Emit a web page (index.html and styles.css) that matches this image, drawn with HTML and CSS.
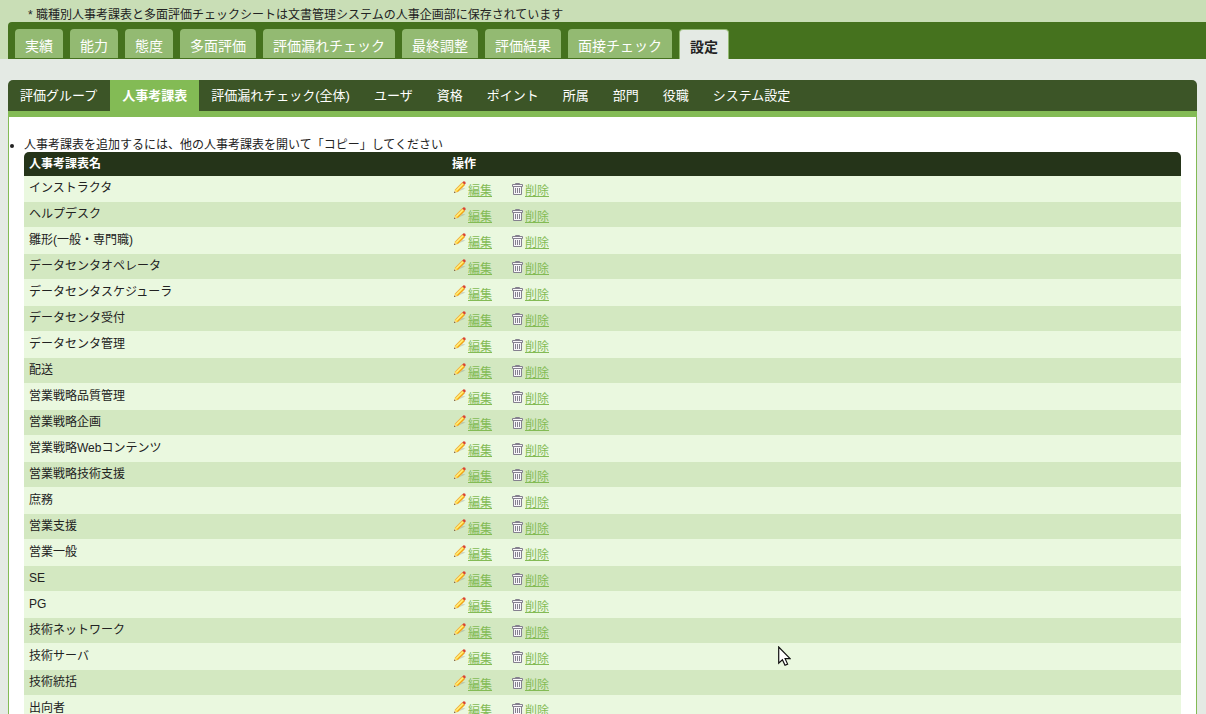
FILE: index.html
```html
<!DOCTYPE html>
<html lang="ja">
<head>
<meta charset="utf-8">
<title>人事考課表</title>
<link rel="stylesheet" href="styles.css">
</head>
<body>
<svg class="defs" aria-hidden="true">
  <symbol id="pencil" viewBox="0 0 12 12">
    <path d="M2 11.6 11.4 7.4 8.6 7 3.6 11.2z" fill="#777" opacity=".3"/>
    <path d="M.3 11.8 1 8.6 8 1.4 10.8 3.8 3.6 11z" fill="#ffd83a"/>
    <path d="M1.3 8.7 8.2 1.6" stroke="#eeb050" stroke-width="1"/>
    <path d="M2.1 9.5 9 2.6" stroke="#fff8b0" stroke-width="1"/>
    <path d="M3.5 10.7 10.4 3.8" stroke="#ef9a1c" stroke-width="1.1"/>
    <path d="M8.2 1.4 9.6.2Q11.6 0 11.8 2.3L10.6 3.8z" fill="#d94532"/>
    <path d="M.8 9.4 2.9 11.2.2 12z" fill="#f1cfae"/>
    <path d="M.1 12 .5 10.6 1.5 11.6z" fill="#443322"/>
  </symbol>
  <symbol id="trash" viewBox="0 0 11 12">
    <path d="M3.5 1.5v-1h4v1M.5 2.5h10M1.5 3.5v8h8v-8" fill="#f8f6fa" stroke="#85808f"/>
    <path d="M.5 1.5h10v2H.5z" fill="#f8f6fa" stroke="#85808f"/>
    <path d="M3.5 5v5M5.5 5v5M7.5 5v5" stroke="#85808f"/>
  </symbol>
</svg>
<header class="top">
  <p class="notice">* 職種別人事考課表と多面評価チェックシートは文書管理システムの人事企画部に保存されています</p>
  <nav class="tabs">
    <a class="tab">実績</a><a class="tab">能力</a><a class="tab">態度</a><a class="tab">多面評価</a><a class="tab">評価漏れチェック</a><a class="tab">最終調整</a><a class="tab">評価結果</a><a class="tab">面接チェック</a><a class="tab tab-active">設定</a>
  </nav>
</header>
<main class="panel">
  <nav class="subnav">
    <a class="sub">評価グループ</a><a class="sub sub-active">人事考課表</a><a class="sub">評価漏れチェック(全体)</a><a class="sub">ユーザ</a><a class="sub">資格</a><a class="sub">ポイント</a><a class="sub">所属</a><a class="sub">部門</a><a class="sub">役職</a><a class="sub">システム設定</a>
  </nav>
  <div class="content">
    <ul class="hints"><li>人事考課表を追加するには、他の人事考課表を開いて「コピー」してください</li></ul>
    <div class="table">
      <div class="head"><span class="name">人事考課表名</span><span>操作</span></div>
      <div id="rows"></div>
    </div>
  </div>
</main>
<svg class="cursor" viewBox="0 0 13 21"><path d="M.7 1v16.2l3.7-3.5 2.6 5.6 2.6-1.2-2.5-5.4h5z" fill="#fff" stroke="#111" stroke-width="1.2"/></svg>
<script src="rows.js"></script>
</body>
</html>
```
FILE: rows.js
```js
const names = ['インストラクタ', 'ヘルプデスク', '雛形(一般・専門職)', 'データセンタオペレータ', 'データセンタスケジューラ', 'データセンタ受付', 'データセンタ管理', '配送', '営業戦略品質管理', '営業戦略企画', '営業戦略Webコンテンツ', '営業戦略技術支援', '庶務', '営業支援', '営業一般', 'SE', 'PG', '技術ネットワーク', '技術サーバ', '技術統括', '出向者'];
document.getElementById('rows').innerHTML = names.map(name => `
  <div class="row"><span class="name">${name}</span>
    <span class="action"><svg class="pencil"><use href="#pencil"/></svg><a class="link">編集</a></span>
    <span class="action"><svg class="trash"><use href="#trash"/></svg><a class="link">削除</a></span>
  </div>`).join('');
```
FILE: styles.css
```css
* { box-sizing: border-box; }
html, body { height: 714px; overflow: hidden; }
body { display: flex; flex-direction: column; margin: 0; background: #e4eae4; color: #222; font: 12px/18px "Liberation Sans", "Noto Sans CJK JP", sans-serif; }
.defs { position: absolute; width: 0; height: 0; }
.top { flex: none; height: 59px; padding-left: 8px; background: #c9deb6; }
.notice { height: 22px; margin: 0; padding: 6px 0 0 20px; white-space: nowrap; }
.tabs { display: flex; gap: 7px; height: 37px; padding: 7px 0 0 7px; background: #45721e; border-radius: 4px 0 0 0; }
.tab { height: 29px; padding: 0 10px; border-radius: 4px 4px 0 0; background: #93ba72; color: #fff; font-size: 14px; line-height: 34px; white-space: nowrap; }
.tab-active { height: 30px; border: 1px solid #93ba72; border-bottom: 0; background: #e4eae4; color: #222; font-weight: bold; }
.panel { display: flex; flex: 1; flex-direction: column; min-height: 0; margin: 21px 9px 0 8px; }
.subnav { display: flex; flex: none; height: 31px; background: #3c5527; border-radius: 5px 5px 0 0; }
.sub { padding: 0 12px; color: #fff; font-size: 13px; line-height: 31px; white-space: nowrap; }
.sub:first-child { padding-right: 13px; }
.sub-active { background: #83bb55; font-weight: bold; }
.content { flex: 1; min-height: 0; padding: 19px 15px 0; overflow: hidden; border: 1px solid #83bb55; border-width: 6px 1px 0; background: #fff; }
.hints { height: 16px; margin: 0; padding: 0; line-height: 19px; }
.head { display: flex; height: 24px; padding-left: 5px; background: #253419; color: #fff; font-weight: bold; line-height: 24px; border-radius: 5px 5px 0 0; }
.name { width: 423px; flex: none; }
.row { display: flex; height: 25px; padding-left: 5px; background: #d3e8c1; line-height: 24px; }
.row:nth-child(odd) { height: 27px; padding-top: 1px; background: #eaf8df; }
.row:nth-child(odd):first-child { height: 26px; padding-top: 0; }
.action { display: flex; width: 58px; padding-left: 2px; }
.pencil { width: 12px; height: 12px; margin: 5px 2px 0 0; }
.trash { width: 11px; height: 12px; margin: 7px 2px 0 0; }
.link { padding-top: 3px; color: #83bb55; text-decoration: underline; }
.cursor { position: absolute; left: 778px; top: 646px; width: 13px; height: 21px; }
```
